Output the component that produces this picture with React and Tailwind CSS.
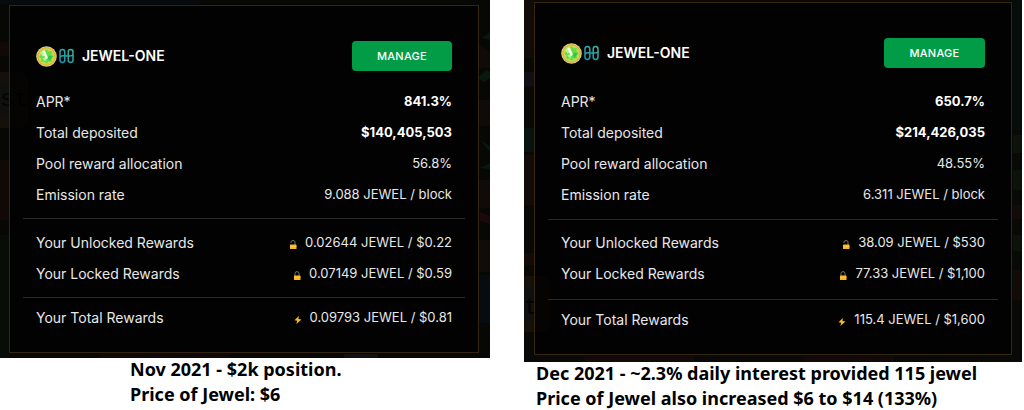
import clsx from 'clsx';

const pools = [
    {
        id: 'nov',
        manage: 'w-[100px]',
        frame: 'pt-[5px] pb-[5px] pl-[9px] pr-[11px]',
        header: 'mb-[15px]',
        divider: 'my-2',
        lastDivider: 'mt-2 mb-1',
        stats: [
            { label: 'APR*', value: '841.3%', bold: true },
            { label: 'Total deposited', value: '$140,405,503', bold: true },
            { label: 'Pool reward allocation', value: '56.8%' },
            { label: 'Emission rate', value: '9.088 JEWEL / block' },
        ],
        unlocked: '0.02644 JEWEL / $0.22',
        locked: '0.07149 JEWEL / $0.59',
        total: '0.09793 JEWEL / $0.81',
        caption: ['Nov 2021 - $2k position.', 'Price of Jewel: $6'],
        captionClass: 'pl-[130px]',
        Scene: SceneLeft,
    },
    {
        id: 'dec',
        manage: 'w-[101px]',
        frame: 'pt-[2px] pb-[7px] px-[10px]',
        header: 'mb-[18px]',
        divider: 'mt-[9px] mb-[7px]',
        lastDivider: 'mt-[10px] mb-1',
        stats: [
            { label: 'APR*', value: '650.7%', bold: true },
            { label: 'Total deposited', value: '$214,426,035', bold: true },
            { label: 'Pool reward allocation', value: '48.55%' },
            { label: 'Emission rate', value: '6.311 JEWEL / block' },
        ],
        unlocked: '38.09 JEWEL / $530',
        locked: '77.33 JEWEL / $1,100',
        total: '115.4 JEWEL / $1,600',
        caption: ['Dec 2021 - ~2.3% daily interest provided 115 jewel', 'Price of Jewel also increased $6 to $14 (133%)'],
        captionClass: 'pl-3',
        Scene: SceneRight,
    },
];

function JewelIcon() {
    return (
        <svg viewBox="0 0 20 20" className="size-[21px]" aria-hidden="true">
            <circle cx="10" cy="10" r="9.8" fill="#d8cfa8" />
            <circle cx="10" cy="10" r="9" fill="#e5b52c" />
            <circle cx="10" cy="10" r="7.6" fill="#c3dc58" />
            <path d="M10 3l2 2.2 3-.4-.2 3L17 10l-2.2 2 .3 3-3-.2L10 17l-2-2.2-3 .2.2-3L3 10l2.200-2.200L5 5l3 .2z" fill="#62dc48" />
            <path d="M4 6l4-2 2 5-4 1zM6 12l4-2-1 5z" fill="#b4f58c" />
            <path d="M6 5l2.500-.8 3 7.300-2 1z" fill="#f4ffe6" />
            <path d="M12 9l4 1-3 4-2-2z" fill="#35c546" />
        </svg>
    );
}

function HarmonyIcon() {
    return (
        <svg viewBox="0 0 15 16" className="h-4 w-[15px]" fill="none" stroke="url(#one)" strokeWidth="1.500" aria-hidden="true">
            <defs>
                <linearGradient id="one" x1="0" y1="16" x2="15" y2="0" gradientUnits="userSpaceOnUse">
                    <stop offset="0" stopColor="#0f94b8" />
                    <stop offset="1" stopColor="#3fb89a" />
                </linearGradient>
            </defs>
            <rect x="1" y="1.500" width="4.800" height="13" rx="2.400" />
            <rect x="9.200" y="1.500" width="4.800" height="13" rx="2.400" />
            <path d="M1 8.800c2-1.600 4-1 6.500-.8s4.500.4 6.500-.9" />
        </svg>
    );
}

function LockIcon({ open }) {
    return (
        <svg viewBox="0 0 8 9" className="mt-1 h-[9px] w-2" aria-hidden="true">
            <path d={open ? 'M2 3V2.200a2 1.700 0 0 1 4 0V5' : 'M2 5V2.500a2 1.900 0 0 1 4 0V5'} fill="none" stroke="#77736a" />
            <rect x="1" y="4.500" width="6.500" height="4.500" rx=".5" fill="#fbb91f" />
            <path d="M1 6.500h6.500" stroke="#ffd45c" strokeWidth=".6" />
        </svg>
    );
}

function BoltIcon() {
    return (
        <svg viewBox="0 0 8 8" className="mt-1 size-2" aria-hidden="true">
            <path d="M4.800 0L.5 4.300l2.700.4L2.400 8 7.500 3.500 4.500 3z" fill="#fbb91f" />
        </svg>
    );
}

/* Very dim scenery behind the cards */
function SceneLeft() {
    return (
        <svg viewBox="0 0 490 358" preserveAspectRatio="none" className="absolute inset-0 size-full" aria-hidden="true">
            <rect width="490" height="358" fill="#070806" />
            <path d="M0 0h200v4H0z" fill="#080b0d" />
            <path d="M0 42h14v14H0zM0 160h9v60H0z" fill="#110906" />
            <path d="M0 72h24l4 6v44l-6 6H0z" fill="#15100a" />
            <path d="M0 82h18v36H0z" fill="#10100e" />
            <path d="M0 235h9v123H0z" fill="#090d08" />
            <path d="M482 38l8-6v8zM478 78l8-8 4 2v6l-6 4zM480 140l10 6v6zM480 168l10-5v6z" fill="#0a170d" />
            <path d="M478 44l12 8v16h-12zM478 100h12v26h-12zM478 180h12v28h-12z" fill="#100a08" />
            <path d="M480 212l10 4v8l-10-3z" fill="#1a080c" />
            <path d="M478 240h12v32h-12z" fill="#0f0c09" />
            <path d="M478 275h12v48h-12z" fill="#070c10" />
            <path d="M100 353h130v5H100z" fill="#100808" />
            <path d="M344 354h34v4h-34z" fill="#111115" />
        </svg>
    );
}

function SceneRight() {
    return (
        <svg viewBox="0 0 498 362" preserveAspectRatio="none" className="absolute inset-0 size-full" aria-hidden="true">
            <rect width="498" height="362" fill="#090a08" />
            <path d="M0 0h10v58H0zM0 155h10v50H0z" fill="#110c09" />
            <path d="M0 72h10v14H0z" fill="#130d15" />
            <path d="M0 128h10v24H0z" fill="#081210" />
            <path d="M0 253h10v12H0z" fill="#140a0a" />
            <path d="M0 276h22l4 5v46l-5 5H0z" fill="#15100a" />
            <path d="M0 286h20v36H0z" fill="#10100e" />
            <path d="M72 34l20-10h40l18 14v24l-20 16H92L74 62z" fill="#0d0807" />
            <path d="M489 0h9v130h-9z" fill="#070d0a" />
            <path d="M489 135h9v18h-9zM489 170h9v20h-9zM489 235h9v16h-9z" fill="#0d130a" />
            <path d="M489 205h9v14h-9zM489 270h9v30h-9z" fill="#140b08" />
            <path d="M60 356h110v6H60zM280 356h90v6h-90z" fill="#110a08" />
        </svg>
    );
}

/* Lettering of the wooden sign that shows through the card */
function SignText({ className, children }) {
    return (
        <span aria-hidden="true" className={clsx("absolute left-0 font-['Liberation_Mono',monospace] text-2xl leading-6 text-[#040404]", className)}>
            {children}
        </span>
    );
}

function Row({ label, value, bold, icon }) {
    return (
        <div className="flex h-[31px] items-center justify-between px-[13px]">
            <dt className="text-sm">{label}</dt>
            <dd className={clsx('flex items-center gap-2 text-[13px]', bold ? 'font-bold text-white' : 'font-normal')}>
                {icon}
                {value}
            </dd>
        </div>
    );
}

function PoolCard({ pool }) {
    const { Scene } = pool;
    return (
        <section>
            <div className={clsx('relative', pool.frame)}>
                <Scene />
                <SignText className={pool.id === 'nov' ? 'top-[88px]' : 'top-[296px]'}>{pool.id === 'nov' ? 'st' : 't'}</SignText>
                <div className="relative border border-[#35270f] bg-black/75 px-[13px] pt-[35px] pb-[19px] text-[#e8e8e8]">
                    <div className={clsx('flex items-center justify-between px-[13px]', pool.header)}>
                        <div className="flex items-center">
                            <JewelIcon />
                            <span className="ml-0.5">
                                <HarmonyIcon />
                            </span>
                            <h2 className="ml-2 text-sm font-semibold text-white">JEWEL-ONE</h2>
                        </div>
                        <button
                            type="button"
                            className={clsx('h-[30px] rounded bg-[#029c46] text-[11px] font-medium tracking-wide text-white', pool.manage)}
                        >
                            MANAGE
                        </button>
                    </div>

                    <dl>
                        {pool.stats.map((stat) => (
                            <Row key={stat.label} {...stat} />
                        ))}
                    </dl>
                    <hr className={clsx('border-[#292929]', pool.divider)} />
                    <dl>
                        <Row label="Your Unlocked Rewards" value={pool.unlocked} icon={<LockIcon open />} />
                        <Row label="Your Locked Rewards" value={pool.locked} icon={<LockIcon />} />
                    </dl>
                    <hr className={clsx('border-[#292929]', pool.lastDivider)} />
                    <dl>
                        <Row label="Your Total Rewards" value={pool.total} icon={<BoltIcon />} />
                    </dl>
                </div>
            </div>

            <div
                className={clsx(
                    "flex flex-col gap-[3px] font-['Noto_Sans',sans-serif] text-lg leading-[22px] font-bold whitespace-nowrap text-black",
                    pool.captionClass,
                )}
            >
                {pool.caption.map((line) => (
                    <p key={line}>{line}</p>
                ))}
            </div>
        </section>
    );
}

export default function App() {
    return (
        <main className="grid grid-cols-[490fr_498fr] items-start gap-[34px] bg-white pr-0.5 font-['Inter',sans-serif]">
            {pools.map((pool) => (
                <PoolCard key={pool.id} pool={pool} />
            ))}
        </main>
    );
}
